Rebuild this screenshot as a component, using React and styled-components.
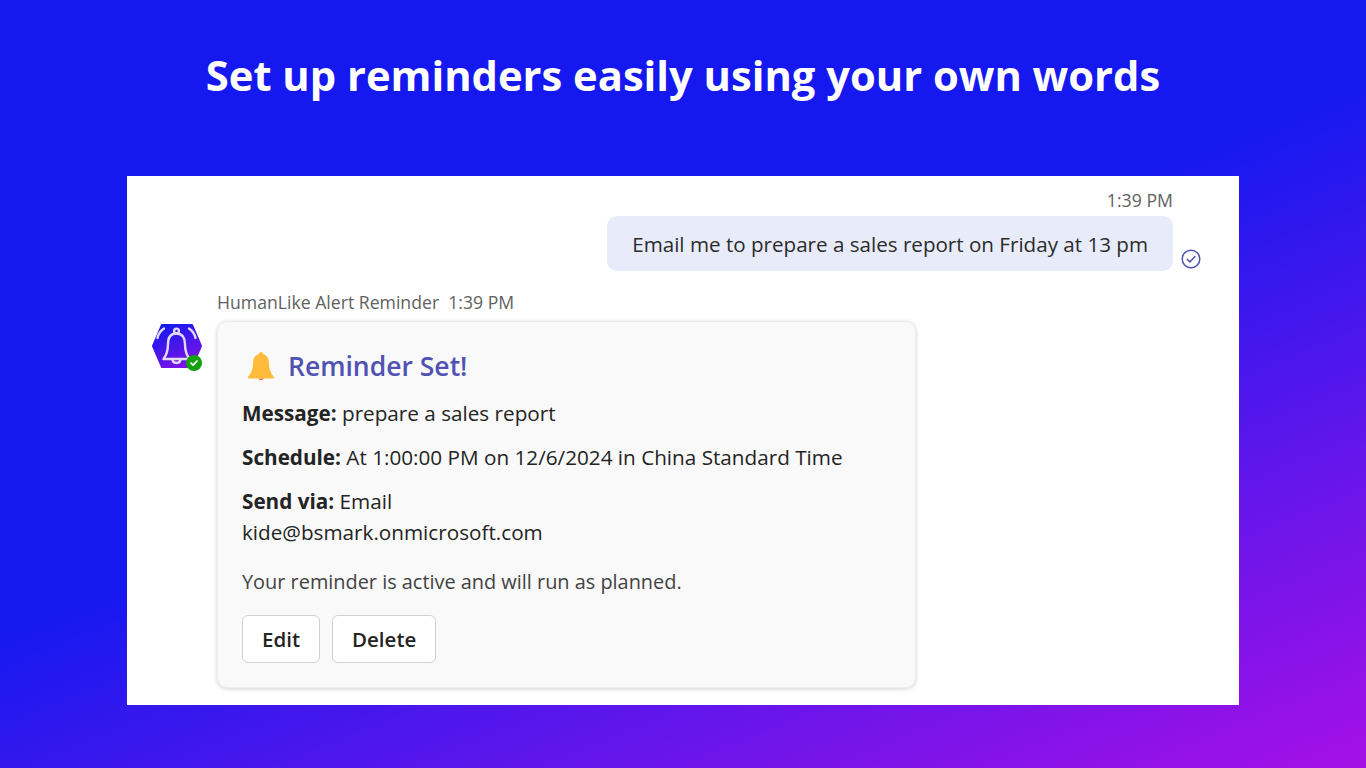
import React from 'react'
import styled, { createGlobalStyle } from 'styled-components'

const Global = createGlobalStyle`
  html, body { margin: 0; padding: 0; height: 100%; }
  body { font-family: "Open Sans", "Noto Sans", sans-serif; color: #242424; }
`

function BotAvatar () {
  return (
    <S.Avatar>
      <svg width="50" height="44" viewBox="0 0 50 44">
        <defs>
          <linearGradient id="hex" x1="0.25" y1="0" x2="0.75" y2="1">
            <stop offset="0" stopColor="#1419ee" />
            <stop offset="1" stopColor="#8312e6" />
          </linearGradient>
        </defs>
        <polygon points="10,1 40,1 49,22 40,43 10,43 1,22" fill="url(#hex)" stroke="url(#hex)" strokeWidth="2" strokeLinejoin="round" />
        <g fill="none" stroke="#e2d8fb" strokeWidth="2.400" strokeLinecap="round" strokeLinejoin="round">
          <circle cx="24.500" cy="7" r="2.400" />
          <path d="M24.500 9.500c-6 0-8.500 4.500-8.500 10.500 0 6-1.500 11-4.500 15h26c-3-4-4.500-9-4.500-15 0-6-2.500-10.500-8.500-10.500z" />
          <path d="M20.500 35c0 2.500 1.800 4 4 4s4-1.500 4-4" />
          <path d="M5.500 14c.8-3.800 3-7.200 6.500-9.500" />
          <path d="M43.500 14c-.8-3.800-3-7.200-6.500-9.500" />
        </g>
      </svg>
      <S.Status>
        <svg width="10" height="10" viewBox="0 0 10 10">
          <path d="M2 5.200l2.100 2L8 3" fill="none" stroke="#fff" strokeWidth="1.700" strokeLinecap="round" strokeLinejoin="round" />
        </svg>
      </S.Status>
    </S.Avatar>
  )
}

function SentIcon () {
  return (
    <svg width="20" height="20" viewBox="0 0 20 20">
      <circle cx="10" cy="10" r="8.800" fill="none" stroke="#4f52b2" strokeWidth="1.500" />
      <path d="M6.200 10.300l2.700 2.600 5-5.400" fill="none" stroke="#4f52b2" strokeWidth="1.500" strokeLinecap="round" strokeLinejoin="round" />
    </svg>
  )
}

function Bell () {
  return (
    <svg width="30" height="30" viewBox="0 0 30 30">
      <path d="M15 1c-1.100 0-1.900.8-2 2C8.500 4.300 7 8 7 13c0 5.500-2 9.500-5 13v1.500h26V26c-3-3.500-5-7.500-5-13 0-5-1.500-8.700-6-10-.1-1.200-.9-2-2-2z" fill="#ffbb3a" />
      <path d="M12.500 27.500h5c-.3 1-1.200 1.500-2.500 1.500s-2.200-.5-2.500-1.500z" fill="#f0793a" />
    </svg>
  )
}

export default function App () {
  return (
    <S.Page>
      <Global />
      <S.Title>Set up reminders easily using your own words</S.Title>
      <S.Panel>
        <S.Outgoing>
          <S.OutgoingBody>
            <S.Time>1:39 PM</S.Time>
            <S.Bubble>Email me to prepare a sales report on Friday at 13 pm</S.Bubble>
          </S.OutgoingBody>
          <S.Sent><SentIcon /></S.Sent>
        </S.Outgoing>
        <S.Incoming>
          <BotAvatar />
          <S.IncomingBody>
            <S.Sender>HumanLike Alert Reminder&nbsp; 1:39 PM</S.Sender>
            <S.Card>
              <S.CardTitle><Bell />Reminder Set!</S.CardTitle>
              <S.Line><b>Message:</b> prepare a sales report</S.Line>
              <S.Line><b>Schedule:</b> At 1:00:00 PM on 12/6/2024 in China Standard Time</S.Line>
              <S.Line><b>Send via:</b> Email<br />kide@bsmark.onmicrosoft.com</S.Line>
              <S.Note>Your reminder is active and will run as planned.</S.Note>
              <S.Actions>
                <S.Button>Edit</S.Button>
                <S.Button>Delete</S.Button>
              </S.Actions>
            </S.Card>
          </S.IncomingBody>
        </S.Incoming>
      </S.Panel>
    </S.Page>
  )
}

const S = {}

S.Page = styled.div`
  width: 1366px;
  height: 768px;
  overflow: hidden;
  display: flex;
  flex-direction: column;
  align-items: center;
  background: linear-gradient(158deg, #1519f0 0%, #1519f0 48%, #7015ea 80%, #a510e6 100%);
`

S.Title = styled.h1`
  margin: 0;
  height: 176px;
  padding-top: 46px;
  box-sizing: border-box;
  font-size: 41.7px;
  line-height: 58px;
  font-weight: 700;
  color: #fff;
  text-align: center;
`

S.Panel = styled.div`
  width: 1112px;
  height: 529px;
  box-sizing: border-box;
  padding: 12px 38px 0 25px;
  background: #fff;
`

S.Outgoing = styled.div`
  display: flex;
  justify-content: flex-end;
  align-items: flex-end;
  gap: 8px;
`

S.OutgoingBody = styled.div`
  display: flex;
  flex-direction: column;
  align-items: flex-end;
`

S.Time = styled.div`
  font-size: 17.7px;
  line-height: 24px;
  color: #616161;
  margin-bottom: 4px;
`

S.Bubble = styled.div`
  height: 55px;
  box-sizing: border-box;
  padding: 0 25px;
  display: flex;
  align-items: center;
  background: #e8ebfa;
  border-radius: 10px;
  font-size: 20.6px;
  color: #2b2b2b;
`

S.Sent = styled.div`
  display: flex;
  height: 20px;
  margin-bottom: 2px;
`

S.Incoming = styled.div`
  display: flex;
  align-items: flex-start;
  gap: 15px;
  margin-top: 19px;
`

S.Avatar = styled.div`
  position: relative;
  width: 50px;
  height: 44px;
  margin-top: 34px;
  flex: none;
`

S.Status = styled.div`
  position: absolute;
  right: 0;
  bottom: -3px;
  width: 16px;
  height: 16px;
  border-radius: 50%;
  background: #13a10e;
  display: flex;
  align-items: center;
  justify-content: center;
`

S.IncomingBody = styled.div`
  display: flex;
  flex-direction: column;
`

S.Sender = styled.div`
  font-size: 17.65px;
  line-height: 24px;
  color: #616161;
  margin-bottom: 7px;
`

S.Card = styled.div`
  width: 699px;
  height: 367px;
  box-sizing: border-box;
  padding: 26px 25px 0 24px;
  background: #f9f9f9;
  border: 1px solid #ededed;
  border-radius: 10px;
  box-shadow: 0 1px 4px rgba(0, 0, 0, 0.18);
`

S.CardTitle = styled.div`
  display: flex;
  align-items: center;
  gap: 12px;
  height: 36px;
  padding-left: 4px;
  margin-bottom: 14px;
  font-size: 26.5px;
  font-weight: 600;
  color: #4f52b2;
`

S.Line = styled.div`
  font-size: 20.7px;
  line-height: 31px;
  margin-bottom: 13px;
  b { font-weight: 700; }
`

S.Note = styled.div`
  font-size: 19.9px;
  line-height: 31px;
  margin-top: 18px;
  color: #424242;
`

S.Actions = styled.div`
  display: flex;
  gap: 12px;
  margin-top: 18px;
`

S.Button = styled.button`
  height: 48px;
  padding: 0 19px;
  background: #fff;
  border: 1px solid #d1d1d1;
  border-radius: 6px;
  font-family: inherit;
  font-size: 20.5px;
  font-weight: 600;
  color: #242424;
`
